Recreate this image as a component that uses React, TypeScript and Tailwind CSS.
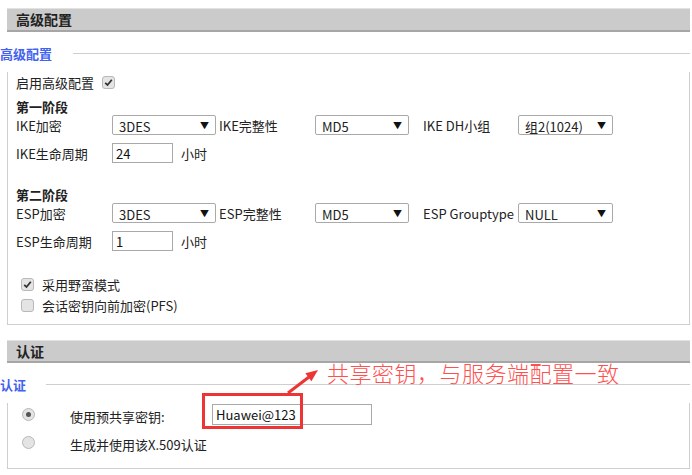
import React from "react";

const FONT = "font-['Noto_Sans_CJK_SC',sans-serif]";

type SelectProps = { value: string; className: string };

const FakeSelect = ({ value, className }: SelectProps) => (
  <div
    className={`flex h-[20px] items-center justify-between rounded-[2px] border border-[#a9a9a9] bg-white pl-[6px] pr-[6px] text-[13px] leading-none text-[#222] ${className}`}
  >
    <span className="pt-[2px]">{value}</span>
    <span className="text-[9px] text-[#111]">▼</span>
  </div>
);

const Check = ({ checked }: { checked: boolean }) => (
  <span className="flex h-[13px] w-[13px] items-center justify-center rounded-[3px] border border-[#b8b8b8] bg-[#e4e4e4]">
    {checked && (
      <svg width="9" height="9" viewBox="0 0 9 9">
        <path d="M1.2 4.8 L3.5 7 L7.8 1.8" fill="none" stroke="#333" strokeWidth="1.8" />
      </svg>
    )}
  </span>
);

const Radio = ({ checked }: { checked: boolean }) => (
  <span className="flex h-[13px] w-[13px] items-center justify-center rounded-full border border-[#b8b8b8] bg-[#e4e4e4]">
    {checked && <span className="h-[5px] w-[5px] rounded-full bg-[#555]" />}
  </span>
);

const SectionBar = ({ title, className }: { title: string; className: string }) => (
  <div
    className={`flex items-center border-t border-b-2 border-t-[#e2e2e2] border-b-[#a6a6a6] bg-[#cbcbcb] pl-[9px] text-[14px] font-bold text-[#222] ${className}`}
  >
    {title}
  </div>
);

const Legend = ({ title, gap }: { title: string; gap: string }) => (
  <div className="-ml-[7px] flex h-[17px] items-center">
    <span className="text-[13px] font-bold leading-none text-[#4262f0]">{title}</span>
    <div className={`h-px flex-1 bg-[#cfcfcf] ${gap}`} />
  </div>
);

const Label = ({ text, className }: { text: string; className: string }) => (
  <span className={`shrink-0 text-[13px] leading-none text-[#222] ${className}`}>{text}</span>
);

const TextBox = ({ value, className }: { value: string; className: string }) => (
  <div
    className={`flex items-center border border-[#a9a9a9] bg-white pl-[3px] text-[13px] leading-none text-[#111] ${className}`}
  >
    {value}
  </div>
);

export default function App() {
  return (
    <div className={`relative h-[475px] w-[692px] overflow-hidden bg-white pl-[7px] pr-[2px] pt-[8px] ${FONT}`}>
      <SectionBar title="高级配置" className="h-[24px]" />

      <div className="mt-[13px]">
        <Legend title="高级配置" gap="ml-[21px]" />
      </div>
      <div className="border-x border-b border-[#cfcfcf] pb-[9px] pl-[8px]">
        <div className="mt-[10px] flex h-[20px] items-center">
          <Label text="启用高级配置" className="" />
          <span className="ml-[8px]">
            <Check checked />
          </span>
        </div>

        <div className="mt-[7px] flex h-[16px] items-center text-[13px] font-bold text-[#222]">第一阶段</div>
        <div className="flex h-[20px] items-center">
          <Label text="IKE加密" className="w-[96px]" />
          <FakeSelect value="3DES" className="w-[104px]" />
          <Label text="IKE完整性" className="ml-[3px] w-[96px]" />
          <FakeSelect value="MD5" className="w-[94px]" />
          <Label text="IKE DH小组" className="ml-[14px] w-[95px]" />
          <FakeSelect value="组2(1024)" className="w-[95px]" />
        </div>
        <div className="mt-[8px] flex h-[20px] items-center">
          <Label text="IKE生命周期" className="w-[96px]" />
          <TextBox value="24" className="h-[20px] w-[61px]" />
          <Label text="小时" className="ml-[8px]" />
        </div>

        <div className="mt-[24px] flex h-[16px] items-center text-[13px] font-bold text-[#222]">第二阶段</div>
        <div className="flex h-[20px] items-center">
          <Label text="ESP加密" className="w-[96px]" />
          <FakeSelect value="3DES" className="w-[104px]" />
          <Label text="ESP完整性" className="ml-[3px] w-[96px]" />
          <FakeSelect value="MD5" className="w-[94px]" />
          <Label text="ESP Grouptype" className="ml-[14px] w-[95px]" />
          <FakeSelect value="NULL" className="w-[95px]" />
        </div>
        <div className="mt-[8px] flex h-[20px] items-center">
          <Label text="ESP生命周期" className="w-[96px]" />
          <TextBox value="1" className="h-[20px] w-[61px]" />
          <Label text="小时" className="ml-[8px]" />
        </div>

        <div className="mt-[23px] flex h-[20px] items-center pl-[5px]">
          <Check checked />
          <Label text="采用野蛮模式" className="ml-[8px]" />
        </div>
        <div className="mt-[1px] flex h-[20px] items-center pl-[5px]">
          <Check checked={false} />
          <Label text="会话密钥向前加密(PFS)" className="ml-[8px]" />
        </div>
      </div>

      <SectionBar title="认证" className="mt-[15px] h-[23px]" />

      <div className="mt-[13px]">
        <Legend title="认证" gap="ml-[20px]" />
      </div>
      <div className="border-x border-b border-[#cfcfcf] pb-[16px] pl-[14px]">
        <div className="mt-[10px] flex h-[22px] items-center">
          <Radio checked />
          <Label text="使用预共享密钥:" className="ml-[35px] w-[142px] pt-[4px]" />
          <TextBox value="Huawei@123" className="h-[21px] w-[160px]" />
        </div>
        <div className="mt-[7px] flex h-[20px] items-center">
          <Radio checked={false} />
          <Label text="生成并使用该X.509认证" className="ml-[35px] pt-[5px]" />
        </div>
      </div>

      {/* annotation overlay */}
      <svg className="pointer-events-none absolute left-0 top-0" width="692" height="475">
        <rect x="203.5" y="394.5" width="98" height="33" fill="none" stroke="#ee3535" strokeWidth="3" />
        <line x1="288" y1="393" x2="309" y2="377" stroke="#ee3535" strokeWidth="3" />
        <polygon points="318,370 311.4,381.2 305.4,373.2" fill="#ee3535" />
      </svg>
      <div className="absolute left-[327px] top-[359px] text-[22px] font-light leading-[26px] tracking-[0.5px] text-[#ff5050]">
        共享密钥，与服务端配置一致
      </div>
    </div>
  );
}
